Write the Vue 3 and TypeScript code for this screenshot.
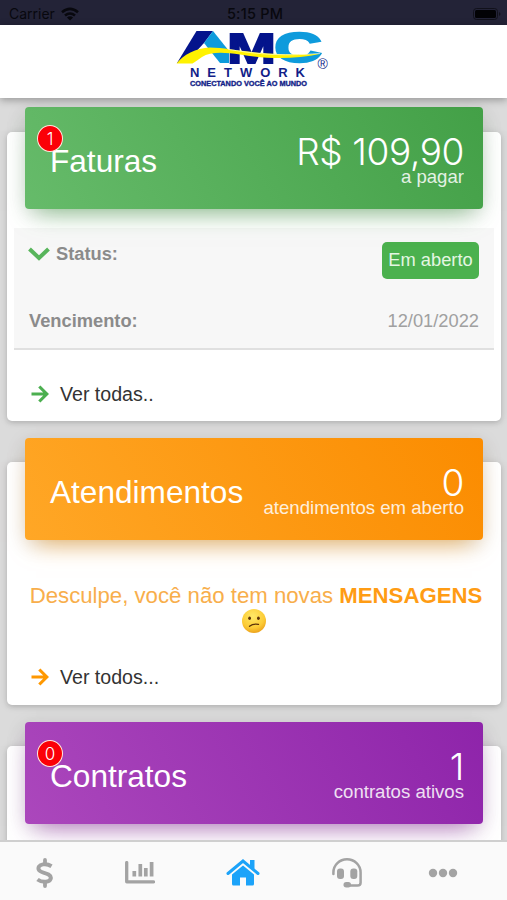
<script setup lang="ts">
interface Panel {
  key: string
  title: string
  badge?: string
  value: string
  caption: string
  link?: string
}

const panels: Panel[] = [
  { key: 'invoices', title: 'Faturas', badge: '1', value: 'R$ 109,90', caption: 'a pagar', link: 'Ver todas..' },
  { key: 'support', title: 'Atendimentos', value: '0', caption: 'atendimentos em aberto', link: 'Ver todos...' },
  { key: 'contracts', title: 'Contratos', badge: '0', value: '1', caption: 'contratos ativos' },
]
</script>

<template>
  <div class="screen">
    <div class="status-bar">
      <div class="carrier">
        <span>Carrier</span>
        <svg width="18" height="14" viewBox="0 0 18 14" fill="none" stroke="#08080e" stroke-width="2.6">
          <path d="M1 5.2Q9-1.6 17 5.2M4 8.6Q9 4.4 14 8.6" />
          <path d="M9 13.4 5.9 10.4Q9 8.2 12.1 10.4Z" fill="#08080e" stroke="none" />
        </svg>
      </div>
      <span class="clock">5:15 PM</span>
      <svg class="battery" width="28" height="12" viewBox="0 0 28 12">
        <rect x=".5" y=".5" width="24" height="11" rx="3" fill="none" stroke="#11111b" />
        <rect x="2" y="2" width="21" height="8" rx="1.5" fill="#020205" />
        <path d="M26 4q3 2 0 4z" fill="#11111b" />
      </svg>
    </div>

    <header class="brand">
      <svg width="160" height="80" viewBox="172 16 160 80" role="img" aria-label="AMC Network">
        <path d="M196.500 31H213L204 43 192 56 182 63H177Z" fill="#04148c" />
        <path d="M213 31 229 51V63H220L204 43Z" fill="#0e9bdc" />
        <text x="227" y="62.500" font-size="42.500" textLength="49" lengthAdjust="spacingAndGlyphs" fill="#04148c" stroke="#04148c" stroke-width="1.800" class="mark">M</text>
        <text x="274.500" y="62.300" font-size="43" textLength="47" lengthAdjust="spacingAndGlyphs" fill="#0e9bdc" stroke="#0e9bdc" stroke-width="2.400" class="mark">C</text>
        <path d="M176.500 63.500C183 55 196 48 210 47.500C232 47.500 255 56.500 321 53.800C290 60.500 262 58 240 54.500C224 52 210 51.500 202 57C198 60 195 62 192.500 63.500Z" fill="#fff200" />
        <path d="M228 49.300C250 53 280 57 320 53.300" fill="none" stroke="#fff" stroke-width=".6" />
        <text x="190" y="76.800" font-size="13" textLength="115" fill="#121e88" class="name">NETWORK</text>
        <text x="190" y="86" font-size="7.300" textLength="117" lengthAdjust="spacingAndGlyphs" fill="#121e88" stroke="#121e88" stroke-width=".35" class="mark">CONECTANDO VOCÊ AO MUNDO</text>
        <text x="317.500" y="68.500" font-size="14" fill="#121e88" class="name reg">®</text>
      </svg>
    </header>

    <main class="content">
      <section v-for="p in panels" :key="p.key" class="card" :class="p.key">
        <div class="card-head">
          <span v-if="p.badge" class="badge">{{ p.badge }}</span>
          <h2>{{ p.title }}</h2>
          <div class="figures">
            <span class="value">{{ p.value }}</span>
            <span class="caption">{{ p.caption }}</span>
          </div>
        </div>

        <div v-if="p.key === 'invoices'" class="details">
          <div class="row first">
            <div class="label">
              <svg width="22" height="14" viewBox="0 0 22 14" fill="none" stroke="#58b55b" stroke-width="4">
                <path d="M1.500 2 11 11 20.500 2" />
              </svg>
              <strong>Status:</strong>
            </div>
            <span class="pill">Em aberto</span>
          </div>
          <div class="row">
            <strong>Vencimento:</strong>
            <span class="date">12/01/2022</span>
          </div>
        </div>

        <div v-if="p.key === 'support'" class="message">
          <p><span class="lead">Desculpe, você não tem novas</span> <b>MENSAGENS</b></p>
          <svg width="26" height="26" viewBox="0 0 26 26">
            <defs>
              <radialGradient id="face" cx=".45" cy=".3" r=".75">
                <stop offset="0" stop-color="#ffe968" />
                <stop offset=".65" stop-color="#fccb35" />
                <stop offset="1" stop-color="#e99a17" />
              </radialGradient>
            </defs>
            <circle cx="13" cy="13" r="12" fill="url(#face)" />
            <ellipse cx="8.600" cy="10.300" rx="1.400" ry="1.800" fill="#5d3409" />
            <ellipse cx="17.400" cy="10.300" rx="1.400" ry="1.800" fill="#5d3409" />
            <path d="M8.500 18.300Q12 15.300 17.500 16.300" fill="none" stroke="#5d3409" stroke-width="1.300" stroke-linecap="round" />
          </svg>
        </div>

        <div v-if="p.link" class="more">
          <svg width="18" height="18" viewBox="0 0 18 18" fill="none" stroke="currentColor" stroke-width="3.100">
            <path d="M.5 9H15.500M8.300 1.500 15.800 9 8.300 16.500" />
          </svg>
          <span>{{ p.link }}</span>
        </div>
      </section>
    </main>

    <nav class="tabs">
      <div class="tab">
        <svg width="18" height="30" viewBox="0 0 18 30" fill="none" stroke="#a3a3a3">
          <path d="M15.500 8.200C12.500 6.300 9.500 6 7 6.400C3.200 7 1.800 9.500 2.800 11.800C4 14.700 9 14.500 12.500 16.500C16.500 19 15 23.500 10 23.800C7 24 4 23.400 1.500 21.500" stroke-width="4" />
          <path d="M9 2V6M9 24V28" stroke-width="3.800" stroke-linecap="round" />
        </svg>
      </div>
      <div class="tab">
        <svg width="30" height="23" viewBox="0 0 30 23" fill="none" stroke="#a3a3a3">
          <path d="M1.700 1.600V20.800H28.500" stroke-width="3.300" stroke-linecap="round" stroke-linejoin="round" />
          <path d="M9.300 10V15.500M15.300 3V15.500M20.800 7V15.500M26.600 1V15.500" stroke-width="3.700" />
        </svg>
      </div>
      <div class="tab">
        <svg width="34" height="27" viewBox="0 0 34 27">
          <path d="M2 14.500 17 2 32 14.500" fill="none" stroke="#1ca3f9" stroke-width="3" stroke-linecap="round" />
          <path d="M24 1H28.500V11L24 7.500Z" fill="#1ca3f9" />
          <path d="M6 15.500 17 6.500 28 15.500V25Q28 26.500 26.500 26.500H20V18.500H14V26.500H7.500Q6 26.500 6 25Z" fill="#1ca3f9" />
        </svg>
      </div>
      <div class="tab">
        <svg width="30" height="30" viewBox="0 0 30 30" fill="none" stroke="#a3a3a3" stroke-width="2.500">
          <path d="M1.400 16V14.500A13.600 13.200 0 0 1 28.600 14.500V24.500Q28.600 27.600 25.500 27.600H14" stroke-linecap="round" />
          <rect x="5" y="10.500" width="7" height="10.500" rx="3" fill="#a3a3a3" stroke="none" />
          <rect x="18.300" y="10.500" width="7" height="10.500" rx="3" fill="#a3a3a3" stroke="none" />
          <rect x="11.500" y="24" width="7.500" height="5.500" rx="2.700" fill="#a3a3a3" stroke="none" />
        </svg>
      </div>
      <div class="tab">
        <svg width="30" height="10" viewBox="0 0 30 10" fill="#a3a3a3">
          <circle cx="5" cy="5" r="4.200" />
          <circle cx="15" cy="5" r="4.200" />
          <circle cx="25" cy="5" r="4.200" />
        </svg>
      </div>
    </nav>
  </div>
</template>

<style>
body {
  margin: 0;
}
</style>

<style scoped>
.screen {
  width: 507px;
  height: 900px;
  display: flex;
  flex-direction: column;
  overflow: hidden;
  background: #dbdbdb;
  font-family: "Liberation Sans", Arial, sans-serif;
}
svg {
  display: block;
  flex: none;
}
.status-bar {
  height: 25px;
  flex: none;
  box-sizing: border-box;
  padding: 2px 6px 0 9px;
  display: grid;
  grid-template-columns: 1fr auto 1fr;
  align-items: center;
  background: #232337;
  color: #08080e;
  font: 14px Inter, sans-serif;
}
.carrier {
  display: flex;
  align-items: center;
  gap: 6px;
}
.clock {
  font-weight: 500;
  font-size: 14.500px;
  letter-spacing: 0.2px;
}
.battery {
  justify-self: end;
}
.brand {
  height: 73px;
  flex: none;
  display: flex;
  justify-content: center;
  align-items: flex-start;
  padding-right: 3px;
  box-sizing: border-box;
  background: #fff;
  box-shadow: 0 2px 8px rgba(0, 0, 0, 0.32);
  z-index: 2;
}
.brand svg {
  margin-top: -9px;
}
.mark {
  font-family: "Liberation Sans", Arial, sans-serif;
  font-weight: 700;
}
.name {
  font-family: "Liberation Sans", Arial, sans-serif;
  font-weight: 700;
}
.reg {
  font-weight: 400;
}
.content {
  flex: 1;
  min-height: 0;
  overflow: hidden;
  padding: 34px 6px 0 7px;
}
.card {
  display: flow-root;
  margin-bottom: 41px;
  border-radius: 5px;
  background: #fff;
  box-shadow: 0 2px 4px rgba(0, 0, 0, 0.1), 0 1px 9px rgba(0, 0, 0, 0.12);
}
.invoices {
  height: 289px;
}
.support {
  height: 243px;
}
.contracts {
  height: 243px;
}
.card-head {
  position: relative;
  height: 102px;
  margin: -25px 18px 0;
  box-sizing: border-box;
  padding: 2px 19px 0 25px;
  display: flex;
  justify-content: space-between;
  border-radius: 4px;
  color: #fff;
}
.invoices .card-head {
  background: linear-gradient(60deg, #66bb6a, #43a047);
  box-shadow: 0 5px 20px rgba(0, 0, 0, 0.13), 0 13px 24px -11px rgba(76, 175, 80, 0.6);
}
.support .card-head {
  margin-top: -24px;
  background: linear-gradient(60deg, #ffa726, #fb8c00);
  box-shadow: 0 5px 20px rgba(0, 0, 0, 0.13), 0 13px 24px -11px rgba(255, 152, 0, 0.6);
}
.contracts .card-head {
  margin-top: -24px;
  background: linear-gradient(60deg, #ab47bc, #8e24aa);
  box-shadow: 0 5px 20px rgba(0, 0, 0, 0.13), 0 13px 24px -11px rgba(156, 39, 176, 0.6);
}
.badge {
  position: absolute;
  left: 12px;
  top: 18px;
  width: 24px;
  height: 25px;
  border: 1.500px solid #ffe9dd;
  border-radius: 50%;
  background: #fb0007;
  font: 300 17px/26px Inter, sans-serif;
  text-align: center;
}
h2 {
  margin: 34px 0 0;
  font-size: 31.600px;
  line-height: 36px;
  font-weight: 400;
}
.figures {
  display: flex;
  flex-direction: column;
  align-items: flex-end;
  padding-top: 28px;
}
.value {
  font: 300 37px/30px Inter, sans-serif;
  letter-spacing: -0.400px;
}
.caption {
  font-size: 18.600px;
  line-height: 20px;
  opacity: 0.85;
}
.details {
  margin: 19px 7px 0;
  height: 120px;
  border-bottom: 2px solid #e0e0e0;
  background: #f7f7f7;
  color: #8b8b8b;
  font-size: 18.300px;
}
.row {
  display: flex;
  justify-content: space-between;
  align-items: center;
  padding: 31px 15px 0;
  line-height: 22px;
}
.row.first {
  padding: 14px 15px 0;
  height: 37px;
}
.label {
  display: flex;
  align-items: center;
  gap: 6px;
  margin: -13px 0 0 -1px;
}
.pill {
  width: 97px;
  line-height: 36px;
  padding-bottom: 1px;
  border-radius: 5px;
  background: #4bb14e;
  color: #e4f6e2;
  text-align: center;
}
.date {
  color: #a0a0a0;
}
.message {
  margin-top: 42px;
  height: 82px;
  color: #ff9c14;
  display: flex;
  flex-direction: column;
  align-items: center;
}
.message p {
  margin: 0 0 0 4px;
  font-size: 22.200px;
  line-height: 28px;
  white-space: nowrap;
}
.lead {
  color: #f8ae4b;
}
.message svg {
  margin-top: -2px;
}
.more {
  display: flex;
  align-items: center;
  gap: 11px;
  margin: 33px 24px 0;
  line-height: 22px;
  font-size: 19.600px;
  color: #4caf50;
}
.support .more {
  margin-top: 2px;
  color: #ff9800;
}
.more span {
  color: #333;
}
.tabs {
  height: 60px;
  flex: none;
  box-sizing: border-box;
  border-top: 2px solid #cfcfcf;
  padding: 3px 15px 0 0;
  display: grid;
  grid-template-columns: 90px 99px 107px 101px 91px;
  align-items: center;
  background: #fafafa;
  z-index: 2;
}
.tab {
  display: flex;
  justify-content: center;
}
</style>
